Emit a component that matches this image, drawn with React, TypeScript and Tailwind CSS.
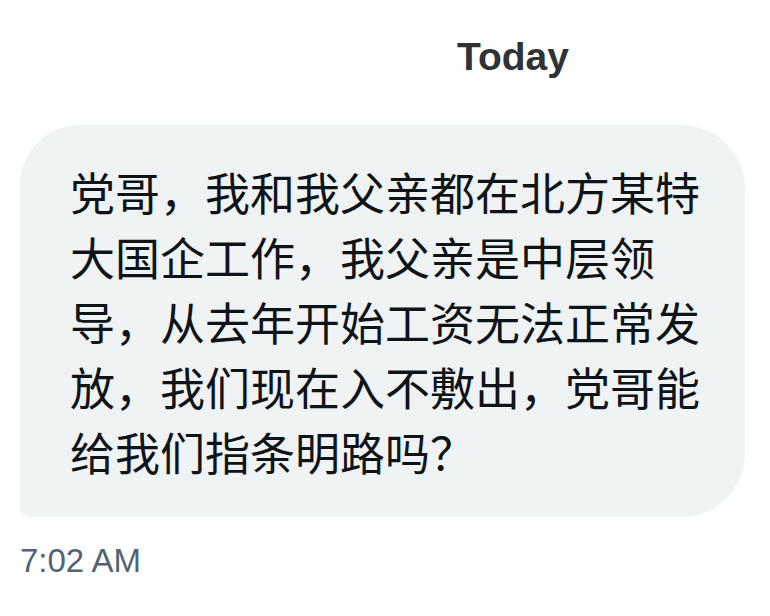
export default function App() {
  return (
    <div className="w-[770px] h-[616px] bg-white overflow-hidden flex flex-col">
      <div className="pt-[38px] pl-[457px] font-['Liberation_Sans',Arial,sans-serif] text-[39px] leading-[38px] font-bold text-[#2f3336]">
        Today
      </div>
      <div className="mt-[49px] ml-[20px] w-[725px] bg-[#eff3f4] rounded-tl-[60px] rounded-tr-[64px] rounded-br-[64px] rounded-bl-[10px] pl-[50px] pr-[40px] pt-[34px] pb-[33px] font-['Noto_Sans_CJK_SC','Noto_Sans',sans-serif] text-[45px] leading-[65px] text-[#0f1419]">
        <div className="w-[640px]">
          党哥，我和我父亲都在北方某特大国企工作，我父亲是中层领导，从去年开始工资无法正常发放，我们现在入不敷出，党哥能给我们指条明路吗？
        </div>
      </div>
      <div className="mt-[27px] pl-[20px] font-['Liberation_Sans',Arial,sans-serif] text-[33px] leading-[33px] text-[#536471]">
        7:02 AM
      </div>
    </div>
  );
}
